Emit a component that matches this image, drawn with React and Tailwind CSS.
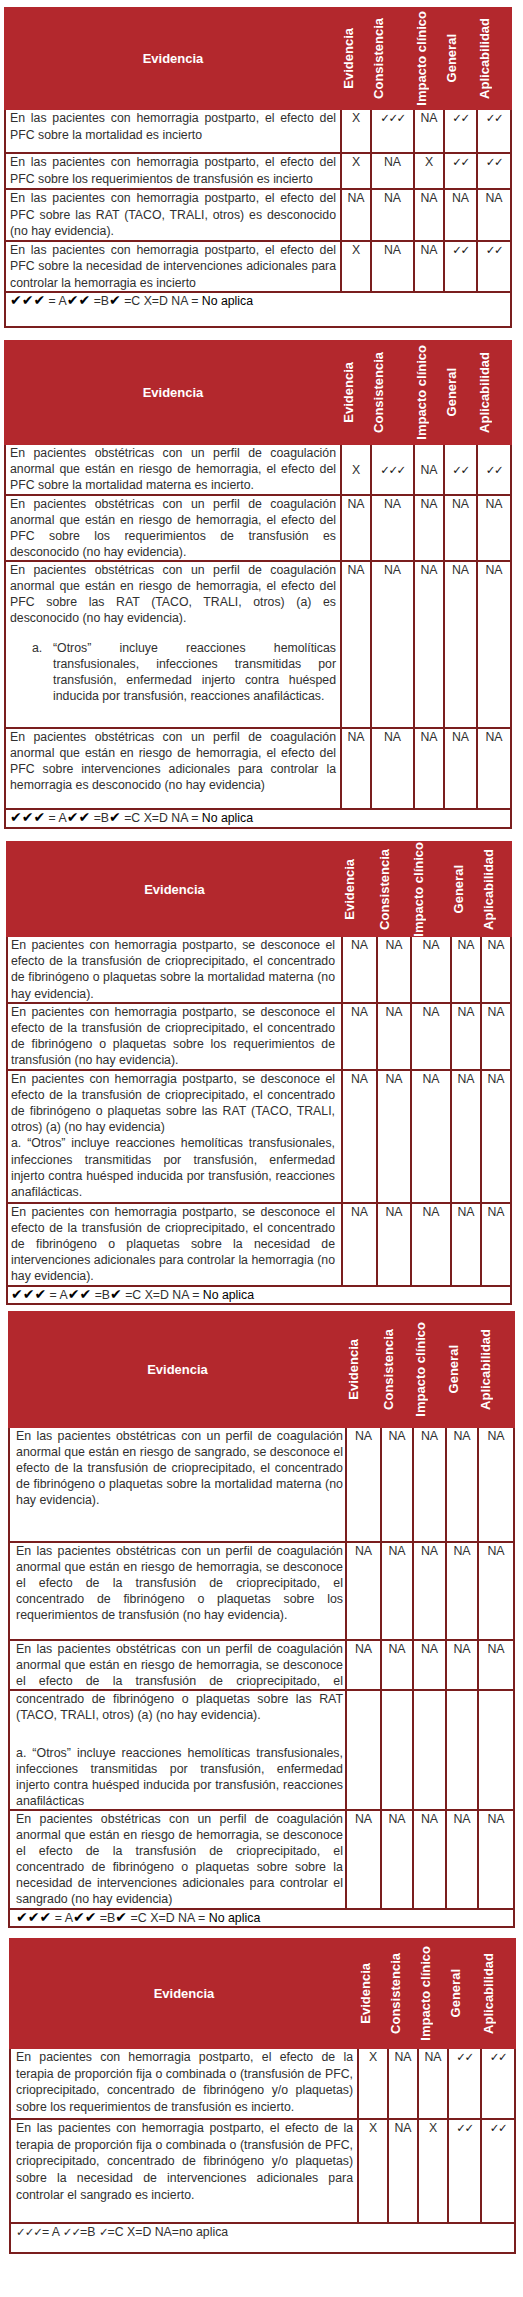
import React from 'react'

const RED = 'bg-[#b3282d]'
const LABELS = ['Evidencia', 'Consistencia', 'Impacto clínico', 'General', 'Aplicabilidad']
const NA5 = ['NA', 'NA', 'NA', 'NA', 'NA']

// check marks get their own font so they render at the right size
const Val = ({ v }) => {
  if (!v) return null
  if (v.includes('✓')) {
    return <span className="font-['DejaVu_Sans',sans-serif] font-bold text-[11.5px] tracking-[-1.5px] text-[#222]">{v}</span>
  }
  return <span>{v}</span>
}

const Heavy = ({ n }) => (
  <span className="font-['DejaVu_Sans',sans-serif] text-[14px] leading-[14px] text-black">{'✔'.repeat(n)}</span>
)

const Legend = () => (
  <span>
    <Heavy n={3} /> = A<Heavy n={2} /> =B<Heavy n={1} /> =C X=D NA = <span className="text-black">No aplica</span>
  </span>
)

const Light = ({ n }) => (
  <span className="font-['DejaVu_Sans',sans-serif] text-[11.5px] tracking-[-1px]">{'✓'.repeat(n)}</span>
)

const LegendLight = () => (
  <span>
    <Light n={3} />= A <Light n={2} />=B <Light n={1} />=C X=D NA=no aplica
  </span>
)

const Otros = ({ text }) => (
  <div className="flex pl-[22px]">
    <span className="w-[21px] shrink-0">a.</span>
    <span className="text-justify">{text}</span>
  </div>
)

const EvidenceTable = ({ cols, headerH, rows, legend, legendH, textCls, pad }) => (
  <table className={`table-fixed border-separate border-spacing-0 ${textCls}`}>
    <colgroup>
      {cols.map((c, i) => (
        <col key={i} className={c} />
      ))}
    </colgroup>
    <thead>
      <tr className={headerH}>
        <th className={`${RED} text-white font-bold text-[13px] leading-[15px] align-middle`}>Evidencia</th>
        {LABELS.map((l) => (
          <th key={l} className={`${RED} text-white font-bold text-[13px] align-middle p-0`}>
            <div className="mx-auto [writing-mode:vertical-rl] rotate-180 whitespace-nowrap leading-[14px]">{l}</div>
          </th>
        ))}
      </tr>
    </thead>
    <tbody>
      {rows.map((r, i) => (
        <tr key={i} className={r.h}>
          <td
            className={`border-l-2 border-r-2 border-b-2 border-[#7a1e1e] ${pad} py-0 align-top text-justify ${
              r.last ? '[text-align-last:justify]' : ''
            }`}
          >
            {r.text}
          </td>
          {r.vals.map((v, j) => (
            <td
              key={j}
              className={`border-r-2 border-b-2 border-[#7a1e1e] text-center p-0 ${r.mid ? 'align-middle' : 'align-top'}`}
            >
              <Val v={v} />
            </td>
          ))}
        </tr>
      ))}
      <tr className={legendH}>
        <td colSpan={6} className={`border-l-2 border-r-2 border-b-2 border-[#7a1e1e] ${pad} py-0 align-top`}>
          {legend}
        </td>
      </tr>
    </tbody>
  </table>
)

const t1 = [
  {
    h: 'h-[44px]',
    text: 'En las pacientes con hemorragia postparto, el efecto del PFC sobre la mortalidad es incierto',
    vals: ['X', '✓✓✓', 'NA', '✓✓', '✓✓'],
  },
  {
    h: 'h-[36px]',
    text: 'En las pacientes con hemorragia postparto, el efecto del PFC sobre los requerimientos de transfusión es incierto',
    vals: ['X', 'NA', 'X', '✓✓', '✓✓'],
  },
  {
    h: 'h-[49px]',
    text: 'En las pacientes con hemorragia postparto, el efecto del PFC sobre las RAT (TACO, TRALI, otros) es desconocido (no hay evidencia).',
    vals: NA5,
  },
  {
    h: 'h-[45px]',
    text: 'En las pacientes con hemorragia postparto, el efecto del PFC sobre la necesidad de intervenciones adicionales para controlar la hemorragia es incierto',
    vals: ['X', 'NA', 'NA', '✓✓', '✓✓'],
  },
]

const t2 = [
  {
    h: 'h-[51px]',
    mid: true,
    text: 'En pacientes obstétricas con un perfil de coagulación anormal que están en riesgo de hemorragia, el efecto del PFC sobre la mortalidad materna es incierto.',
    vals: ['X', '✓✓✓', 'NA', '✓✓', '✓✓'],
  },
  {
    h: 'h-[62px]',
    text: 'En pacientes obstétricas con un perfil de coagulación anormal que están en riesgo de hemorragia, el efecto del PFC sobre los requerimientos de transfusión es desconocido (no hay evidencia).',
    vals: NA5,
  },
  {
    h: 'h-[167px]',
    text: (
      <>
        <p>
          En pacientes obstétricas con un perfil de coagulación anormal que están en riesgo de hemorragia, el efecto del
          PFC sobre las RAT (TACO, TRALI, otros) (a) es desconocido (no hay evidencia).
        </p>
        <div className="h-[14px]" />
        <Otros text="“Otros” incluye reacciones hemolíticas transfusionales, infecciones transmitidas por transfusión, enfermedad injerto contra huésped inducida por transfusión, reacciones anafilácticas." />
      </>
    ),
    vals: NA5,
  },
  {
    h: 'h-[81px]',
    text: 'En pacientes obstétricas con un perfil de coagulación anormal que están en riesgo de hemorragia, el efecto del PFC sobre intervenciones adicionales para controlar la hemorragia es desconocido (no hay evidencia)',
    vals: NA5,
  },
]

const crio =
  'En pacientes con hemorragia postparto, se desconoce el efecto de la transfusión de crioprecipitado, el concentrado de fibrinógeno o plaquetas sobre '

const t3 = [
  { h: 'h-[66px]', text: crio + 'la mortalidad materna (no hay evidencia).', vals: NA5 },
  { h: 'h-[64px]', text: crio + 'los requerimientos de transfusión (no hay evidencia).', vals: NA5 },
  {
    h: 'h-[133px]',
    text: (
      <>
        <p>{crio + 'las RAT (TACO, TRALI, otros) (a) (no hay evidencia)'}</p>
        <p>
          a. “Otros” incluye reacciones hemolíticas transfusionales, infecciones transmitidas por transfusión, enfermedad
          injerto contra huésped inducida por transfusión, reacciones anafilácticas.
        </p>
      </>
    ),
    vals: NA5,
  },
  {
    h: 'h-[82px]',
    text: crio + 'la necesidad de intervenciones adicionales para controlar la hemorragia (no hay evidencia).',
    vals: NA5,
  },
]

const t4 = [
  {
    h: 'h-[115px]',
    text: 'En las pacientes obstétricas con un perfil de coagulación anormal que están en riesgo de sangrado, se desconoce el efecto de la transfusión de crioprecipitado, el concentrado de fibrinógeno o plaquetas sobre la mortalidad materna (no hay evidencia).',
    vals: NA5,
  },
  {
    h: 'h-[98px]',
    text: 'En las pacientes obstétricas con un perfil de coagulación anormal que están en riesgo de hemorragia, se desconoce el efecto de la transfusión de crioprecipitado, el concentrado de fibrinógeno o plaquetas sobre los requerimientos de transfusión (no hay evidencia).',
    vals: NA5,
  },
  {
    h: 'h-[48px]',
    last: true,
    text: 'En las pacientes obstétricas con un perfil de coagulación anormal que están en riesgo de hemorragia, se desconoce el efecto de la transfusión de crioprecipitado, el',
    vals: NA5,
  },
  {
    h: 'h-[118px]',
    text: (
      <>
        <p>concentrado de fibrinógeno o plaquetas sobre las RAT (TACO, TRALI, otros) (a) (no hay evidencia).</p>
        <div className="h-[22px]" />
        <p>
          a. “Otros” incluye reacciones hemolíticas transfusionales, infecciones transmitidas por transfusión, enfermedad
          injerto contra huésped inducida por transfusión, reacciones anafilácticas
        </p>
      </>
    ),
    vals: ['', '', '', '', ''],
  },
  {
    h: 'h-[99px]',
    text: 'En pacientes obstétricas con un perfil de coagulación anormal que están en riesgo de hemorragia, se desconoce el efecto de la transfusión de crioprecipitado, el concentrado de fibrinógeno o plaquetas sobre sobre la necesidad de intervenciones adicionales para controlar el sangrado (no hay evidencia)',
    vals: NA5,
  },
]

const t5 = [
  {
    h: 'h-[71px]',
    text: 'En pacientes con hemorragia postparto, el efecto de la terapia de proporción fija o combinada o (transfusión de PFC, crioprecipitado, concentrado de fibrinógeno y/o plaquetas) sobre los requerimientos de transfusión es incierto.',
    vals: ['X', 'NA', 'NA', '✓✓', '✓✓'],
  },
  {
    h: 'h-[104px]',
    text: 'En las pacientes con hemorragia postparto, el efecto de la terapia de proporción fija o combinada o (transfusión de PFC, crioprecipitado, concentrado de fibrinógeno y/o plaquetas) sobre la necesidad de intervenciones adicionales para controlar el sangrado es incierto.',
    vals: ['X', 'NA', 'X', '✓✓', '✓✓'],
  },
]

export default function App() {
  return (
    <div className="w-[523px] min-h-[2297px] bg-white pb-[17px] font-[Liberation_Sans,Arial,sans-serif] text-[#303030]">
      <div className="pt-[7px] pl-[4px]">
        <EvidenceTable
          cols={['w-[338px]', 'w-[30px]', 'w-[43px]', 'w-[30px]', 'w-[33px]', 'w-[34px]']}
          headerH="h-[103px]"
          rows={t1}
          legend={<Legend />}
          legendH="h-[35px]"
          textCls="text-[12.3px] leading-[16.5px]"
          pad="pl-[4px] pr-[4px]"
        />
      </div>
      <div className="pt-[12px] pl-[4px]">
        <EvidenceTable
          cols={['w-[338px]', 'w-[30px]', 'w-[43px]', 'w-[30px]', 'w-[33px]', 'w-[34px]']}
          headerH="h-[105px]"
          rows={t2}
          legend={<Legend />}
          legendH="h-[19px]"
          textCls="text-[12.3px] leading-[16px]"
          pad="pl-[4px] pr-[4px]"
        />
      </div>
      <div className="pt-[12px] pl-[6px]">
        <EvidenceTable
          cols={['w-[337px]', 'w-[35px]', 'w-[34px]', 'w-[40px]', 'w-[30px]', 'w-[30px]']}
          headerH="h-[96px]"
          rows={t3}
          legend={<Legend />}
          legendH="h-[18px]"
          textCls="text-[12.3px] leading-[16.2px]"
          pad="pl-[3px] pr-[6px]"
        />
      </div>
      <div className="pt-[6px] pl-[8px]">
        <EvidenceTable
          cols={['w-[339px]', 'w-[35px]', 'w-[32px]', 'w-[33px]', 'w-[32px]', 'w-[36px]']}
          headerH="h-[117px]"
          rows={t4}
          legend={<Legend />}
          legendH="h-[18px]"
          textCls="text-[12.4px] leading-[16px]"
          pad="pl-[6px] pr-[2px]"
        />
      </div>
      <div className="pt-[10px] pl-[9px]">
        <EvidenceTable
          cols={['w-[350px]', 'w-[30px]', 'w-[30px]', 'w-[30px]', 'w-[33px]', 'w-[34px]']}
          headerH="h-[111px]"
          rows={t5}
          legend={<LegendLight />}
          legendH="h-[30px]"
          textCls="text-[12.3px] leading-[16.7px]"
          pad="pl-[5px] pr-[4px]"
        />
      </div>
    </div>
  )
}
